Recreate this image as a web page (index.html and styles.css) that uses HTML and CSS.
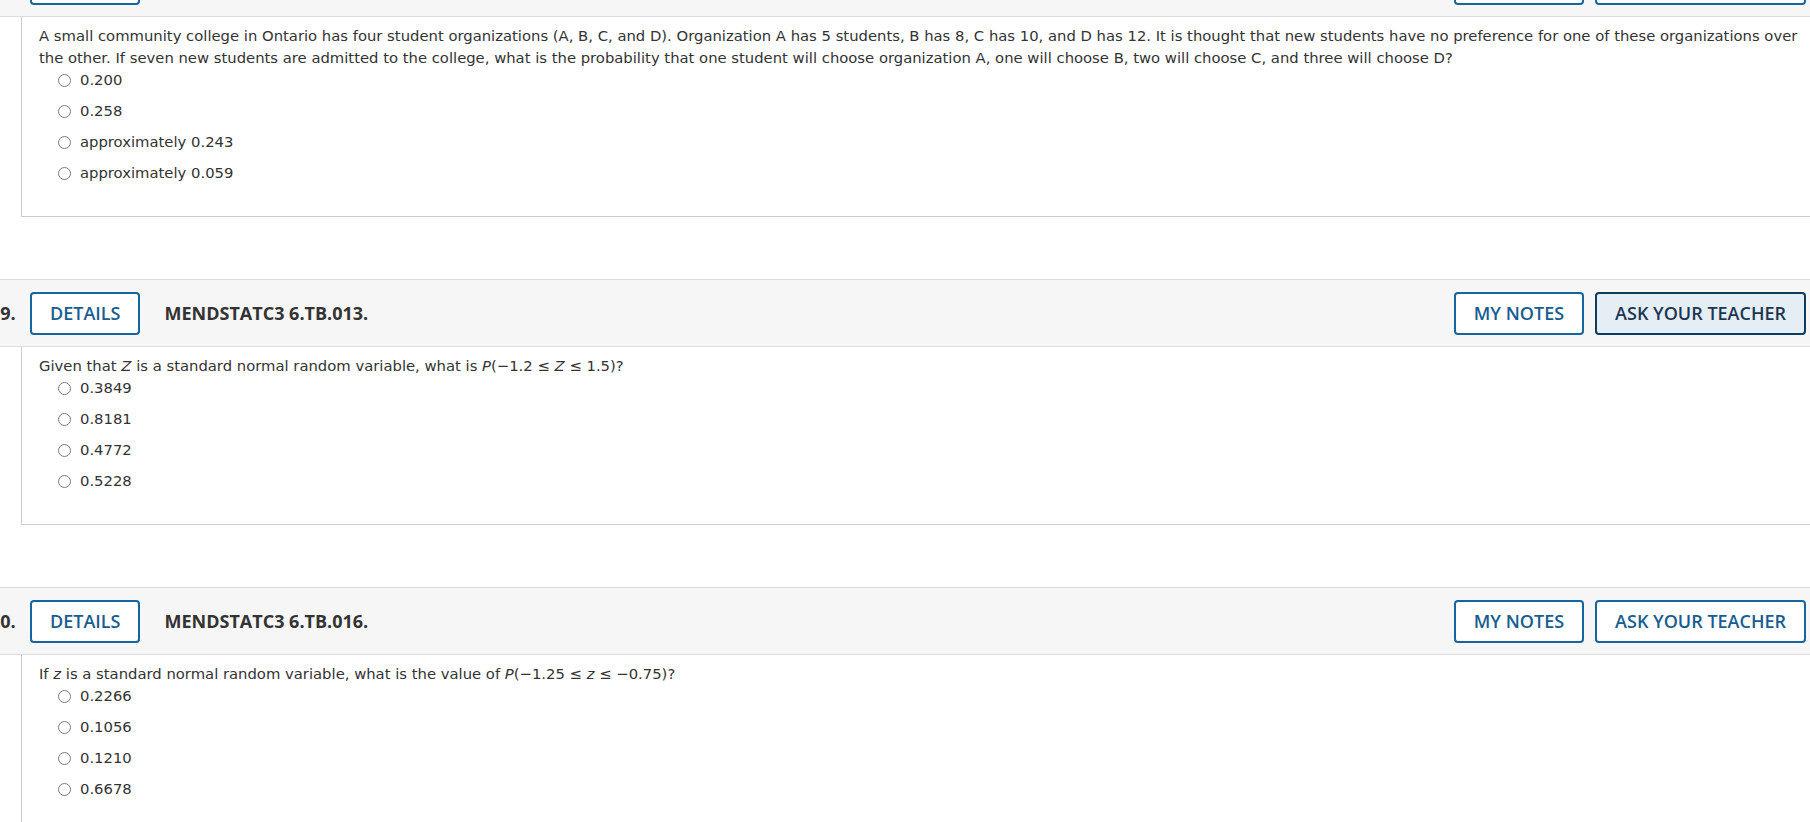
FILE: index.html
```html
<!DOCTYPE html>
<html lang="en">
<head>
<meta charset="utf-8">
<title>Questions</title>
<link rel="stylesheet" href="styles.css">
</head>
<body>
<div class="page">

  <section class="question">
    <div class="q-header">
      <span class="q-num">18.</span>
      <button class="btn">DETAILS</button>
      <span class="q-title">MENDSTATC3 6.TB.009.</span>
      <span class="spacer"></span>
      <button class="btn">MY NOTES</button>
      <button class="btn">ASK YOUR TEACHER</button>
    </div>
    <div class="q-body">
      <p class="q-text">A small community college in Ontario has four student organizations (A, B, C, and D). Organization A has 5 students, B has 8, C has 10, and D has 12. It is thought that new students have no preference for one of these organizations over the other. If seven new students are admitted to the college, what is the probability that one student will choose organization A, one will choose B, two will choose C, and three will choose D?</p>
      <ul class="options">
        <li><span class="radio"></span>0.200</li>
        <li><span class="radio"></span>0.258</li>
        <li><span class="radio"></span>approximately 0.243</li>
        <li><span class="radio"></span>approximately 0.059</li>
      </ul>
    </div>
  </section>

  <section class="question">
    <div class="q-header">
      <span class="q-num">19.</span>
      <button class="btn">DETAILS</button>
      <span class="q-title">MENDSTATC3 6.TB.013.</span>
      <span class="spacer"></span>
      <button class="btn">MY NOTES</button>
      <button class="btn btn-active">ASK YOUR TEACHER</button>
    </div>
    <div class="q-body">
      <p class="q-text">Given that <i>Z</i> is a standard normal random variable, what is <i>P</i>(&minus;1.2 &le; <i>Z</i> &le; 1.5)?</p>
      <ul class="options">
        <li><span class="radio"></span>0.3849</li>
        <li><span class="radio"></span>0.8181</li>
        <li><span class="radio"></span>0.4772</li>
        <li><span class="radio"></span>0.5228</li>
      </ul>
    </div>
  </section>

  <section class="question">
    <div class="q-header">
      <span class="q-num">20.</span>
      <button class="btn">DETAILS</button>
      <span class="q-title">MENDSTATC3 6.TB.016.</span>
      <span class="spacer"></span>
      <button class="btn">MY NOTES</button>
      <button class="btn">ASK YOUR TEACHER</button>
    </div>
    <div class="q-body">
      <p class="q-text">If <i>z</i> is a standard normal random variable, what is the value of <i>P</i>(&minus;1.25 &le; <i>z</i> &le; &minus;0.75)?</p>
      <ul class="options">
        <li><span class="radio"></span>0.2266</li>
        <li><span class="radio"></span>0.1056</li>
        <li><span class="radio"></span>0.1210</li>
        <li><span class="radio"></span>0.6678</li>
      </ul>
    </div>
  </section>

</div>
</body>
</html>
```

FILE: styles.css
```css
html, body {
  margin: 0;
  padding: 0;
  background: #ffffff;
  overflow: hidden;
}

.page {
  width: 1810px;
  margin-top: -51px;
}

.question {
  margin-bottom: 62px;
}

.q-header {
  display: flex;
  align-items: center;
  height: 66px;
  background: #f6f6f6;
  border-top: 1px solid #dddddd;
  border-bottom: 1px solid #dddddd;
  padding: 0 4px 0 0;
  font-family: "Open Sans", "Liberation Sans", sans-serif;
  box-sizing: content-box;
}

.q-num {
  margin-left: -10px;
  font-size: 18px;
  font-weight: 700;
  color: #333333;
  width: 22px;
  margin-right: 18px;
}

.btn {
  font-family: "Open Sans", "Liberation Sans", sans-serif;
  font-size: 18px;
  font-weight: 600;
  height: 43px;
  padding: 0 18px;
  border: 2px solid #16659c;
  border-radius: 4px;
  background: #ffffff;
  color: #175d91;
  line-height: 1;
  cursor: pointer;
}

.btn + .btn {
  margin-left: 11px;
}

.btn-active {
  background: #e6eef5;
  border-color: #0d3c5f;
  color: #1b3652;
}

.q-title {
  margin-left: 24px;
  font-size: 18px;
  font-weight: 700;
  color: #333333;
}

.spacer {
  flex: 1;
}

.q-body {
  margin-left: 21px;
  margin-right: -20px;
  border-left: 1px solid #cccccc;
  border-right: 1px solid #cccccc;
  border-bottom: 1px solid #cccccc;
  padding: 8px 28px 32px 17px;
  font-family: "DejaVu Sans", Verdana, sans-serif;
  font-size: 14.8px;
  color: #333333;
}

.q-text {
  margin: 0;
  line-height: 22px;
}

.options {
  list-style: none;
  margin: 0;
  padding: 0 0 0 19px;
}

.options li {
  display: flex;
  align-items: center;
  height: 22px;
  line-height: 22px;
}

.options li + li {
  margin-top: 9px;
}

.radio {
  width: 11px;
  height: 11px;
  border: 1px solid #7a7a7a;
  border-radius: 50%;
  background: #ffffff;
  margin-right: 9px;
  flex: none;
}
```
